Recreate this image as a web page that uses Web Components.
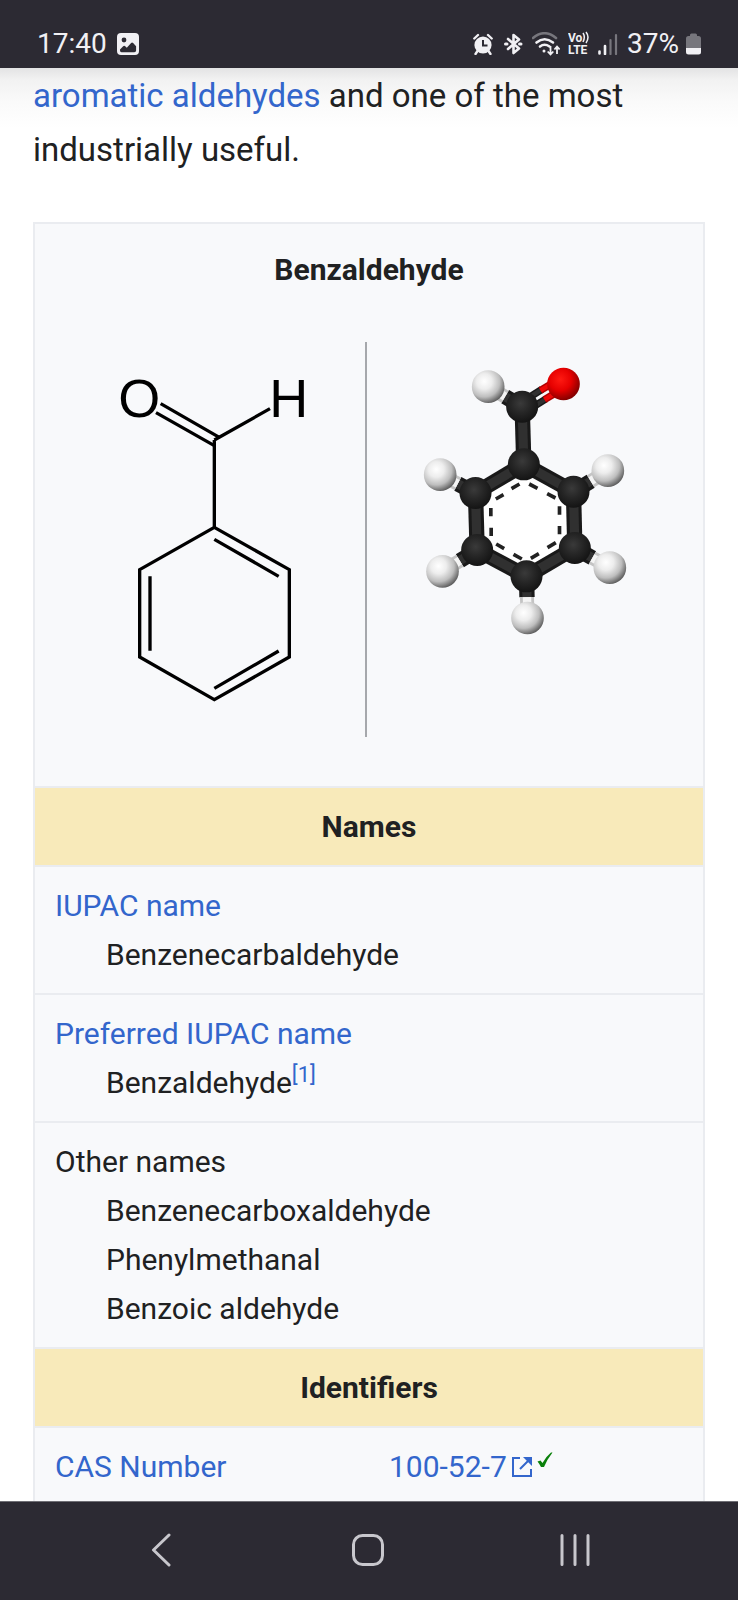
<!DOCTYPE html>
<html lang="en">
<head>
<meta charset="utf-8">
<meta name="viewport" content="width=device-width, initial-scale=1">
<title>Benzaldehyde</title>
<style>
  body { margin: 0; font-family: Roboto, "Liberation Sans", sans-serif; color: #202122; background: #fff; }
</style>
</head>
<body>
<phone-shell>
  <status-bar slot="top"></status-bar>
  <article-lead><a href="#aromatic">aromatic aldehydes</a> and one of the most industrially useful.</article-lead>
  <chem-infobox>
    <span slot="title">Benzaldehyde</span>
    <skeletal-formula slot="left"></skeletal-formula>
    <ball-model slot="right"></ball-model>
  </chem-infobox>
  <nav-bar slot="bottom"></nav-bar>
</phone-shell>

<script>
const define = (name, html) => {
  const template = document.createElement('template');
  template.innerHTML = html;
  customElements.define(name, class extends HTMLElement {
    constructor() {
      super();
      this.attachShadow({ mode: 'open' }).append(template.content.cloneNode(true));
    }
  });
};

define('phone-shell', `
<style>
  :host { display: grid; grid-template-rows: auto minmax(0, 1fr) auto; height: 100vh; }
  main { overflow-y: auto; scrollbar-width: none; padding: 1px 33px 0;
    background: linear-gradient(#e3e3e4, #f2f2f2 12px, #fafafa 34px, #fff 60px); }
</style>
<slot name="top"></slot>
<main><slot></slot></main>
<slot name="bottom"></slot>`);

define('status-bar', `
<style>
  :host { display: block; background: #2c2a33; color: #f1f0f4; }
  header { display: flex; align-items: center; justify-content: space-between; padding: 27px 37px 7px; line-height: 34px; font-size: 28px; }
  div { display: flex; align-items: center; gap: 8px; }
  .clock { gap: 10px; }
  .power { gap: 7px; }
  svg { display: block; fill: none; stroke: #f1f0f4; }
  text { font-family: Roboto, sans-serif; font-weight: 700; fill: #f1f0f4; stroke: none; }
</style>
<header>
  <div class="clock">
    <time>17:40</time>
    <svg width="22" height="22" viewBox="0 0 22 22" aria-label="Image notification">
      <rect x="0" y="0" width="22" height="22" rx="4" fill="#f1f0f4" stroke="none"/>
      <circle cx="7" cy="7" r="2.4" fill="#2c2a33" stroke="none"/>
      <path d="M3 16.500l3.200-3.200q1-.9 2 0l1.600 1.500 4.300-4.800q1-1 2 0l3 3.300v4.200q0 1.800-1.800 1.800H4.500Q3 19 3 17.500z" fill="#2c2a33" stroke="none"/>
    </svg>
  </div>
  <div>
    <svg width="23" height="22" viewBox="0 0 23 22" aria-label="Alarm">
      <circle cx="10" cy="12" r="8.600" fill="#f1f0f4" stroke="none"/>
      <path d="M1.300 5.500L5 2M18.700 5.500L15 2M4.500 18L2.500 21M15.500 18l2 3" stroke-width="2.400" stroke-linecap="round"/>
      <path d="M10 7v5.500h4.500" stroke="#2c2a33" stroke-width="2"/>
    </svg>
    <svg width="20" height="22" viewBox="0 0 20 22" aria-label="Bluetooth">
      <path d="M4 6l11 9.500-5.500 4.500V2L15 6.500 4 16" stroke-width="2.600" stroke-linejoin="round" stroke-linecap="round"/>
      <path d="M1.500 11h1.500M15.500 11H17" stroke-width="3" stroke-linecap="round"/>
    </svg>
    <svg width="28" height="24" viewBox="0 0 28 24" aria-label="Wi-Fi">
      <path d="M1 6Q12.500-3.500 24 6" stroke="#77767d" stroke-width="2.600" stroke-linecap="round"/>
      <path d="M4.500 10.500q8-6.500 16.500 0M8 14.500q4.500-3.500 9.500 0" stroke-width="2.600" stroke-linecap="round"/>
      <circle cx="12" cy="19" r="1.500" fill="#f1f0f4" stroke="none"/>
      <path d="M18.500 14v8M15.700 19.500l2.800 3 2.800-3M25 22v-7M22.400 17.500l2.600-3 2.600 3" stroke-width="1.800"/>
    </svg>
    <svg width="22" height="28" viewBox="0 0 22 28" aria-label="VoLTE">
      <text x="0" y="12" font-size="12">Vo</text>
      <path d="M15 3q2.600 4 0 9M18 2q4 5 0 11" stroke-width="1.500"/>
      <text x="0" y="24" font-size="12">LTE</text>
    </svg>
    <svg width="21" height="22" viewBox="0 0 21 22" aria-label="Signal">
      <path d="M1.500 18.500v2M7 13v8" stroke-width="2.600" stroke-linecap="round"/>
      <path d="M12.500 7v14M18 2v19" stroke="#77767d" stroke-width="2.200" stroke-linecap="round"/>
    </svg>
    <div class="power">
      <span>37%</span>
      <svg width="15" height="22" viewBox="0 0 15 22" aria-label="Battery">
        <path d="M4 2q0-1.500 1.500-1.500h4Q11 .5 11 2v1h1.500Q15 3 15 5.500V15H0V5.500Q0 3 2.500 3H4z" fill="#77767d" stroke="none"/>
        <path d="M0 15h15v4q0 2.500-2.500 2.500h-10Q0 21.500 0 19z" fill="#f1f0f4" stroke="none"/>
      </svg>
    </div>
  </div>
</header>`);

define('article-lead', `
<style>
  :host { display: block; font-size: 33px; line-height: 54px; margin-bottom: 45px; }
  p { margin: 0; }
  ::slotted(a) { color: #36c; text-decoration: none; }
</style>
<p><slot></slot></p>`);

define('chem-infobox', `
<style>
  :host { display: block; font-size: 30px; line-height: 49px; --edge: #eaecf0; }
  table { width: 100%; box-sizing: border-box; table-layout: fixed; border-spacing: 0; border: 2px solid var(--edge); background: #f8f9fb; }
  td, th { padding: 14px 20px; border-top: 2px solid var(--edge); text-align: left; vertical-align: top; font-weight: 400; }
  .title { padding: 21px 0 0; border: 0; text-align: center; font-weight: 700; }
  .figures { padding: 48px 0 49px; border: 0; }
  .pair { display: grid; grid-template-columns: 330fr 338fr; }
  .pair > div + div { border-left: 2px solid #a6a8ac; }
  .section { padding: 14px 0; background: #f8eaba; text-align: center; font-weight: 700; }
  dl, dd { margin: 0; }
  dd { margin-left: 51px; }
  a { color: #36c; text-decoration: none; }
  sup { font-size: 22px; line-height: 0; vertical-align: 11px; }
  .value { display: flex; align-items: center; }
  .value a { display: flex; align-items: center; gap: 4px; }
  .check { margin: 0 0 14px 4px; }
  svg { display: block; }
</style>
<table>
  <tbody>
    <tr><th class="title" colspan="2"><slot name="title"></slot></th></tr>
    <tr><td class="figures" colspan="2">
      <div class="pair"><div><slot name="left"></slot></div><div><slot name="right"></slot></div></div>
    </td></tr>
    <tr><th class="section" colspan="2">Names</th></tr>
    <tr><td colspan="2"><dl><dt><a href="#iupac">IUPAC name</a></dt><dd>Benzenecarbaldehyde</dd></dl></td></tr>
    <tr><td colspan="2"><dl><dt><a href="#preferred">Preferred IUPAC name</a></dt><dd>Benzaldehyde<sup><a href="#cite-1">[1]</a></sup></dd></dl></td></tr>
    <tr><td colspan="2"><dl><dt>Other names</dt><dd>Benzenecarboxaldehyde</dd><dd>Phenylmethanal</dd><dd>Benzoic aldehyde</dd></dl></td></tr>
    <tr><th class="section" colspan="2">Identifiers</th></tr>
    <tr>
      <th><a href="#cas">CAS Number</a></th>
      <td><div class="value">
        <a href="#100-52-7">100-52-7
          <svg width="22" height="22" viewBox="0 0 22 22" fill="none" stroke="#36c" stroke-width="2">
            <path d="M9 2H2v18h18v-7M9 13L18 4"/><path d="M12 1h9v9z" fill="#36c" stroke="none"/>
          </svg>
        </a>
        <svg class="check" width="16" height="16" viewBox="0 0 16 16" role="img" aria-label="Verified">
          <path d="M.5 9.500l3-1 2 2.500Q9 4.500 14 .5H15.500Q10 7.500 7 15H4Q2.500 12 .5 9.500z" fill="#0a800a"/>
        </svg>
      </div></td>
    </tr>
  </tbody>
</table>`);

define('skeletal-formula', `
<style>
  :host { display: block; }
  svg { display: block; width: 100%; height: 395px; }
  text { font-family: "Liberation Sans", Arial, sans-serif; font-size: 162px; fill: #000; }
</style>
<svg viewBox="-165 36 990 1185" role="img" aria-label="Skeletal formula of benzaldehyde">
  <g fill="none" stroke="#000" stroke-width="10" stroke-linejoin="miter">
    <path d="M373 592L598 719V981L373 1109 149 981V719ZM373 592V330M373 330L540 236"/>
    <path d="M212 221L388 322M198 248L373 347"/>
    <path d="M373 628L566 739M180 739V962M373 1075L566 963"/>
  </g>
  <text x="85" y="260">O</text>
  <text x="538" y="260">H</text>
</svg>`);

/* Ball-and-stick model: bonds first, then the atoms over them. */
const bond = (x1, y1, x2, y2, w = 46, a = '#191919', b = '#303030') =>
  `<path d="M${x1} ${y1}L${x2} ${y2}" stroke="${a}" stroke-width="${w}"/><path d="M${x1} ${y1}L${x2} ${y2}" stroke="${b}" stroke-width="${w * 0.6}"/>`;
const hBond = (cx, cy, hx, hy, t) => {
  const mx = cx + (hx - cx) * t, my = cy + (hy - cy) * t;
  return bond(cx, cy, mx, my) + bond(mx, my, hx, hy, 42, '#c4c4c4', '#f4f4f4');
};
const carbons = [[365, 170], [370, 343], [519, 425], [523, 594], [378, 679], [230, 600], [225, 429]];
const hydrogens = [[263, 110], [622, 362], [628, 653], [381, 804], [126, 664], [119, 374]];
const bonds = [[0, 1], [1, 2], [2, 3], [3, 4], [4, 5], [5, 6], [6, 1]].map(([i, j]) => bond(...carbons[i], ...carbons[j])).join('');
const hBonds = [[0, 0], [2, 1], [3, 2], [4, 3], [5, 4], [6, 5]]
  .map(([c, h]) => hBond(...carbons[c], ...hydrogens[h], 0.5)).join('');

define('ball-model', `
<style>
  :host { display: block; }
  svg { display: block; width: 100%; height: 395px; }
</style>
<svg viewBox="-99 -24 1005 1185" role="img" aria-label="Ball-and-stick model of benzaldehyde">
  <defs>
    <radialGradient id="c" cx=".45" cy=".4" r=".6"><stop offset="0" stop-color="#3a3a3a"/><stop offset=".5" stop-color="#262626"/><stop offset="1" stop-color="#141414"/></radialGradient>
    <radialGradient id="h" cx=".38" cy=".34" r=".68"><stop offset="0" stop-color="#fff"/><stop offset=".35" stop-color="#ededed"/><stop offset=".7" stop-color="#bebebe"/><stop offset="1" stop-color="#606060"/></radialGradient>
    <radialGradient id="o" cx=".4" cy=".36" r=".68"><stop offset="0" stop-color="#ff1a12"/><stop offset=".5" stop-color="#e60000"/><stop offset="1" stop-color="#7a0000"/></radialGradient>
  </defs>
  <path d="M${carbons.slice(1).map(p => p.join(' ')).join('L')}Z" fill="#fff"/>
  <g fill="none">
    ${hBonds}${bonds}
    ${bond(371, 152, 424, 118, 22)}${bond(386, 178, 436, 147, 22)}
    ${bond(420, 121, 482, 84, 22, '#b00000', '#ee0808')}${bond(432, 149, 500, 108, 22, '#b00000', '#ee0808')}
    <path d="M357 402L333 416M309 434L286 447M386 402L411 415M440 431L465 444M271 474V499M272 533V558M477 469V494M477 528V553M287 582L311 596M339 613L364 627M391 625L415 611M441 593L466 578" stroke="#222" stroke-width="11"/>
  </g>
  ${carbons.map(([x, y]) => `<circle cx="${x}" cy="${y}" r="48" fill="url(#c)"/>`).join('')}
  ${hydrogens.map(([x, y]) => `<circle cx="${x}" cy="${y}" r="49" fill="url(#h)"/>`).join('')}
  <circle cx="489" cy="102" r="49" fill="url(#o)"/>
</svg>`);

define('nav-bar', `
<style>
  :host { display: block; background: #2c2a33; }
  nav { display: grid; grid-template-columns: repeat(3, 1fr); padding: 0 60px 2px 58px; border-top: 1px solid #6f6e75; }
  button { display: grid; place-items: center; height: 96px; padding: 0; border: 0; background: none; }
  svg { display: block; fill: none; stroke: #c8c7cd; stroke-width: 3; stroke-linecap: round; stroke-linejoin: round; }
</style>
<nav>
  <button type="button" aria-label="Back"><svg width="34" height="34" viewBox="0 0 34 34"><path d="M25 2L9.500 17 25 32"/></svg></button>
  <button type="button" aria-label="Home"><svg width="34" height="34" viewBox="0 0 34 34"><rect x="2.500" y="2.500" width="29" height="29" rx="9"/></svg></button>
  <button type="button" aria-label="Recent apps"><svg width="34" height="34" viewBox="0 0 34 34"><path d="M4 2.500v29M17 2.500v29M30 2.500v29"/></svg></button>
</nav>`);
</script>
</body>
</html>
